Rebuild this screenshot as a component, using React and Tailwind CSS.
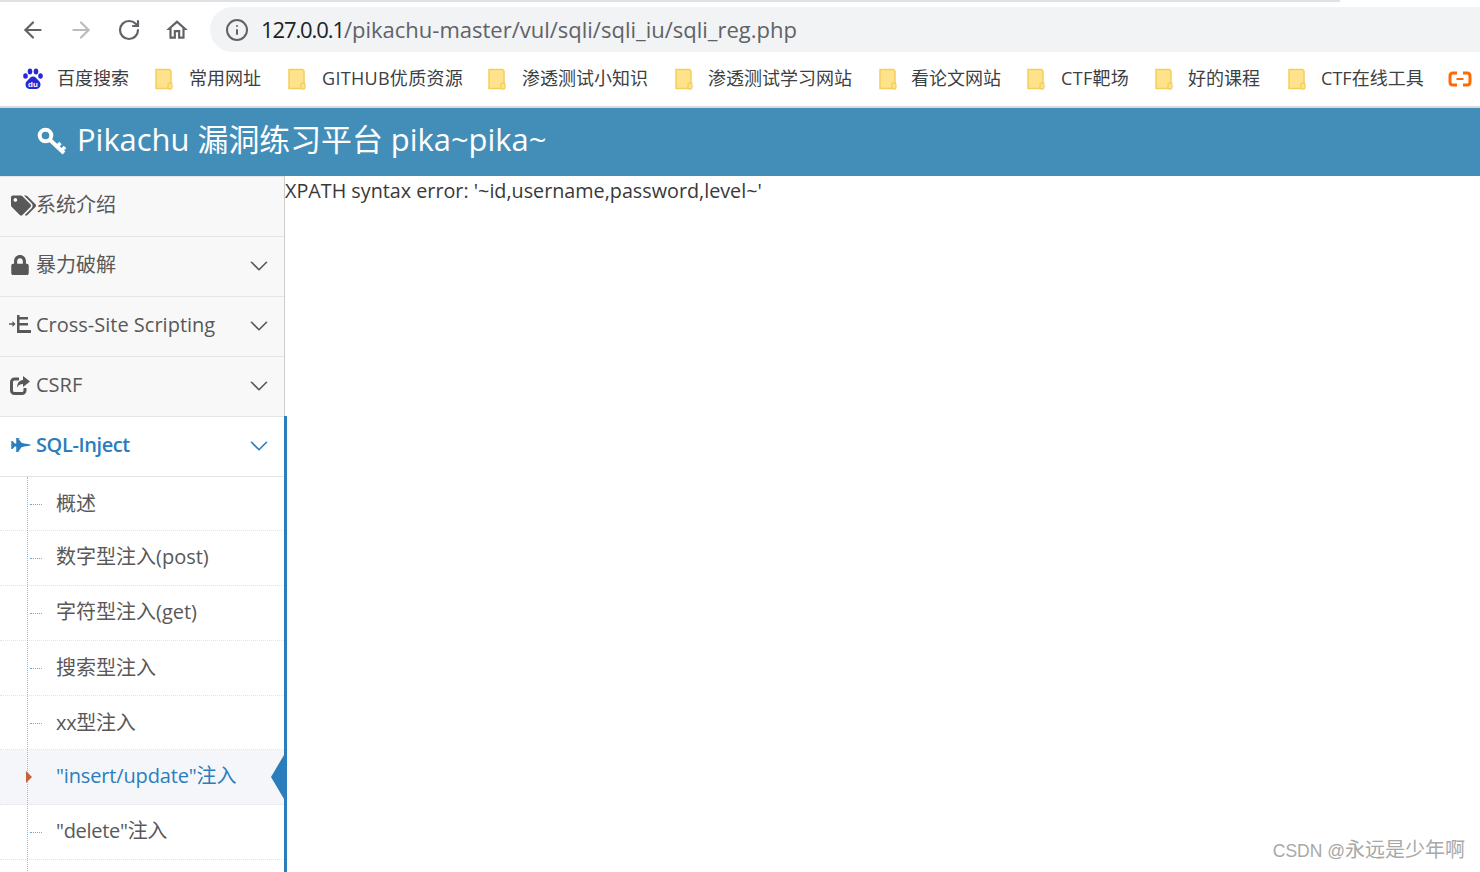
import { ArrowLeft, ArrowRight, RotateCw, Info, ChevronDown } from 'lucide-react';
import { FaTags, FaLock, FaFighterJet } from 'react-icons/fa';

const font = "font-['Open_Sans','Noto_Sans_CJK_SC',sans-serif]";

const bookmarks = [
  { label: '常用网址', next: 'mr-[27px]', ml: 'ml-[16px]' },
  { label: 'GITHUB优质资源', next: 'mr-[25px]', ml: 'ml-[16px]', extra: 'tracking-[0.3px]' },
  { label: '渗透测试小知识', next: 'mr-[27px]', ml: 'ml-[16px]' },
  { label: '渗透测试学习网站', next: 'mr-[27px]', ml: 'ml-[15px]' },
  { label: '看论文网站', next: 'mr-[26px]', ml: 'ml-[14px]' },
  { label: 'CTF靶场', next: 'mr-[26px]', ml: 'ml-[16px]', extra: 'tracking-[0.3px]' },
  { label: '好的课程', next: 'mr-[28px]', ml: 'ml-[15px]' },
  { label: 'CTF在线工具', next: 'mr-[24px]', ml: 'ml-[15px]' },
];

function OutdentIcon() {
  return (
    <svg width="24" height="20" viewBox="0 0 24 20" fill="#585858">
      <path d="M1 8.300h3.500V6l3 3-3 3V9.700H1z" />
      <rect x="9" y="0" width="2.500" height="18" />
      <rect x="11" y="2" width="9" height="2.500" />
      <rect x="11" y="8" width="9" height="2.500" />
      <rect x="11" y="15" width="12" height="3" />
    </svg>
  );
}

function ShareIcon() {
  return (
    <svg width="21" height="19" viewBox="0 0 21 19">
      <path d="M9 3H4.500C2.800 3 1.500 4.300 1.500 6v8.500c0 1.700 1.300 3 3 3H12c1.700 0 3-1.300 3-3V12" fill="none" stroke="#585858" strokeWidth="3" />
      <path d="M13 0l7 5.500-7 5.500V8c-3 0-5 1-6 4 0-5 2-7.500 6-8z" fill="#585858" />
    </svg>
  );
}

const menu = [
  { label: '系统介绍', icon: <FaTags className="text-[25px]" />, arrow: false, pl: 'pl-[11px]' },
  { label: '暴力破解', icon: <FaLock className="text-[20px]" />, arrow: true, pl: 'pl-[10px]' },
  { label: 'Cross-Site Scripting', icon: <OutdentIcon />, arrow: true, pl: 'pl-[8px]' },
  { label: 'CSRF', icon: <ShareIcon />, arrow: true, pl: 'pl-[10px]' },
];

const subMenu = [
  { label: '概述', h: 'h-[54px]' },
  { label: '数字型注入(post)', h: 'h-[55px]', pb: 'pb-[2px]' },
  { label: '字符型注入(get)', h: 'h-[55px]', pb: 'pb-[2px]' },
  { label: '搜索型注入', h: 'h-[55px]', pb: 'pb-[1px]' },
  { label: 'xx型注入', h: 'h-[54px]', extra: 'tracking-[-0.300px]' },
  { label: '"insert/update"注入', h: 'h-[55px]', pb: 'pb-[2px]', active: true, extra: 'tracking-[-0.150px]' },
  { label: '"delete"注入', h: 'h-[55px]', pb: 'pb-[2px]', extra: 'tracking-[-0.300px]' },
];

function FolderIcon() {
  return (
    <svg width="18" height="22" viewBox="0 0 18 22" className="shrink-0">
      <path d="M1 1.500h13.500l1.500 1.500v17.500H1z" fill="#ffe38c" stroke="#f5cf5a" strokeWidth="1.500" />
      <rect x="13" y="15" width="4" height="6" rx="1" fill="#ffe38c" stroke="#f0c64c" strokeWidth="1" />
    </svg>
  );
}

function BaiduIcon() {
  return (
    <svg width="22" height="22" viewBox="0 0 22 22" className="shrink-0">
      <g fill="#2529d8">
        <ellipse cx="3.500" cy="8" rx="2.300" ry="2.800" />
        <ellipse cx="8" cy="3.500" rx="2.300" ry="3" />
        <ellipse cx="14" cy="3.500" rx="2.300" ry="3" />
        <ellipse cx="18.500" cy="8" rx="2.300" ry="2.800" />
        <path d="M11 8.500c2.500 0 3.500 2 5 3.500s2.500 2.500 2.500 4.500c0 3-2.500 4.500-4.500 4.500H8c-2 0-4.500-1.500-4.500-4.500 0-2 1-3 2.500-4.500s2.500-3.500 5-3.500z" />
      </g>
      <text x="11" y="19" textAnchor="middle" fontSize="8" fontWeight="700" fill="#fff" fontFamily="'Liberation Sans', sans-serif">du</text>
    </svg>
  );
}

function AliIcon() {
  return (
    <svg width="24" height="16" viewBox="0 0 24 16" className="shrink-0">
      <path d="M9 2H5C3 2 2 3 2 5v6c0 2 1 3 3 3h4M15 2h4c2 0 3 1 3 3v6c0 2-1 3-3 3h-4" fill="none" stroke="#ff6a00" strokeWidth="3" />
      <rect x="8.500" y="7" width="7" height="2" fill="#ff6a00" />
    </svg>
  );
}

function KeyIcon() {
  return (
    <svg width="30" height="28" viewBox="0 0 30 28" fill="none" stroke="#fff" className="shrink-0">
      <circle cx="8.500" cy="8.500" r="5.800" strokeWidth="4" />
      <path d="M12.500 12.500L27 26" strokeWidth="4" />
      <path d="M20 19.500l3.500-3.500M24.500 23.500l3.500-3.500" strokeWidth="3.500" />
    </svg>
  );
}

function HomeIcon() {
  return (
    <svg width="26" height="26" viewBox="0 0 24 24" fill="currentColor">
      <path d="M12 5.690l5 4.500V18h-2v-6H9v6H7v-7.810l5-4.500M12 3L2 12h3v8h6v-6h2v6h6v-8h3L12 3z" />
    </svg>
  );
}

const App = () => {
  return (
    <div className={`${font} relative h-[872px] w-[1480px] overflow-hidden bg-white`}>
      {/* Browser toolbar */}
      <div className="relative flex h-[54px] items-start bg-white pt-[7px]">
        <div className="absolute left-0 top-0 h-[2px] w-[1340px] bg-[#dee1e6]" />
        <div className="flex h-[45px] w-[210px] items-center pl-[20px] text-[#5f6368]">
          <ArrowLeft size={26} strokeWidth={2} />
          <ArrowRight size={26} strokeWidth={2} className="ml-[22px] text-[#babcbe]" />
          <RotateCw size={24} strokeWidth={2.200} className="ml-[23px]" />
          <div className="ml-[23px]">
            <HomeIcon />
          </div>
        </div>
        <div className="flex h-[45px] flex-1 items-center rounded-l-[23px] bg-[#f1f3f4] pb-[2px] pl-[15px]">
          <Info size={24} strokeWidth={2} className="mt-[2px] text-[#5f6368]" />
          <span className="ml-[12px] text-[22px] leading-none text-[#202124]">
            <span className="tracking-[-1.100px]">127.0.0.1</span>
            <span className="text-[#5f6368]">/pikachu-master/vul/sqli/sqli_iu/sqli_reg.php</span>
          </span>
        </div>
      </div>

      {/* Bookmarks */}
      <div className="flex h-[52px] items-center overflow-hidden whitespace-nowrap pb-[3px] pl-[22px] text-[18px] text-[#3c4043]">
        <BaiduIcon />
        <span className="ml-[13px] mr-[26px]">百度搜索</span>
        {bookmarks.map((b) => (
          <div key={b.label} className={`flex items-center ${b.next}`}>
            <FolderIcon />
            <span className={`${b.ml} ${b.extra || ''}`}>{b.label}</span>
          </div>
        ))}
        <AliIcon />
      </div>

      {/* Page header */}
      <div className="flex h-[70px] items-center border-t-2 border-[#d9dadc] bg-[#438eb9] pb-[3px] pl-[37px] text-white">
        <KeyIcon />
        <span className="ml-[10px] pb-[2px] text-[30.900px] leading-none">Pikachu 漏洞练习平台 pika~pika~</span>
      </div>

      <div className="flex">
        {/* Sidebar */}
        <div className="w-[285px] shrink-0 border-r border-t border-[#cccccc] border-t-[#e5e5e5] bg-[#f8f8f8] text-[20px] text-[#585858]">
          {menu.map((m) => (
            <div key={m.label} className="flex h-[60px] items-center border-b border-[#e5e5e5] pr-[10px]">
              <div className={`w-[36px] shrink-0 pb-[3px] ${m.pl}`}>{m.icon}</div>
              <span className="flex-1 pb-[4px] leading-none">{m.label}</span>
              {m.arrow && <ChevronDown size={30} strokeWidth={1.300} className="mb-[2px]" />}
            </div>
          ))}
          <div className="relative bg-white">
            <div className="absolute bottom-0 right-[-3px] top-[-1px] w-[3px] bg-[#2b7dbc]" />
            <div className="flex h-[60px] items-center border-b border-[#e5e5e5] pr-[10px] text-[#2b7dbc]">
              <div className="w-[36px] shrink-0 pb-[3px] pl-[11px]">
                <FaFighterJet className="text-[20px]" />
              </div>
              <span className="flex-1 pb-[4px] font-semibold leading-none tracking-[-0.400px]">SQL-Inject</span>
              <ChevronDown size={30} strokeWidth={1.300} className="mb-[2px]" />
            </div>
            <div className="relative h-[396px] overflow-hidden">
              <div className="absolute bottom-0 left-[27px] top-0 z-10 border-l border-dotted border-[#9dbdd6]" />
              {subMenu.map((s) => (
                <div
                  key={s.label}
                  className={`relative flex ${s.h} items-center border-b border-dotted border-[#e4e4e4] pl-[56px] ${s.active ? 'bg-[#f4f6f9] text-[#2b7dbc]' : ''}`}
                >
                  {s.active ? (
                    <>
                      <div className="absolute left-[26px] top-1/2 z-20 h-0 w-0 -translate-y-1/2 border-y-[6px] border-l-[6px] border-y-transparent border-l-[#c86139]" />
                      <div className="absolute right-0 top-1/2 h-0 w-0 -translate-y-1/2 border-y-[22px] border-r-[13px] border-y-transparent border-r-[#2b7dbc]" />
                    </>
                  ) : (
                    <div className="absolute left-[30px] top-1/2 w-[12px] border-t border-dotted border-[#6aa6d6]" />
                  )}
                  <span className={`leading-none ${s.pb || ''} ${s.extra || ''}`}>{s.label}</span>
                </div>
              ))}
            </div>
          </div>
        </div>

        {/* Content */}
        <div className="flex-1 text-[19.750px] leading-[30px] text-[#393939]">
          XPATH syntax error: '~id,username,password,level~'
        </div>
      </div>

      <div className="absolute bottom-[7px] right-[15px] font-['Liberation_Sans','Noto_Sans_CJK_SC',sans-serif] text-[20px] leading-[28px] text-[#a8a8a8]">
        <span className="text-[17.500px]">CSDN @</span>永远是少年啊
      </div>
    </div>
  );
};

export default App;
